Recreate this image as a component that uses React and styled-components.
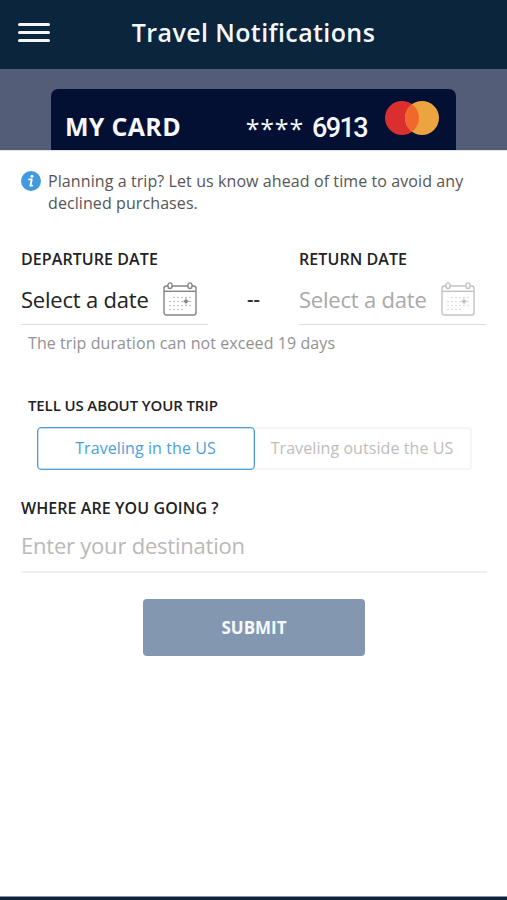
import { useState } from "react";
import styled, { createGlobalStyle } from "styled-components";

const GlobalStyle = createGlobalStyle`
*{
    box-sizing: border-box;
}
body{
    margin:0;
    background-color: #0b253c;
    font-family: "Open Sans", "Noto Sans", sans-serif;
}
button, input{
    font-family: inherit;
}
`

const Page = styled.div`
height: 900px;
display: flex;
flex-direction: column;
overflow: hidden;
background-color: #0b253c;
`

// Top bar

const TopBar = styled.header`
height: 69px;
flex-shrink: 0;
display: grid;
grid-template-columns: 34px 1fr 34px;
align-items: center;
padding: 0 18px 5px;
`
const MenuButton = styled.button`
width: 32px;
height: 19px;
margin-top: 1px;
padding: 0;
border: none;
background: none;
display: flex;
flex-direction: column;
justify-content: space-between;
cursor: pointer;
`
const MenuLine = styled.span`
width: 100%;
height: 3px;
border-radius: 2px;
background-color: #f4f7fa;
`
const Title = styled.h1`
margin: 0;
color: #f4f7fb;
font-size: 25px;
line-height: 34px;
font-weight: 600;
letter-spacing: .4px;
text-align: center;
white-space: nowrap;
`

// Card strip

const CardStrip = styled.div`
height: 81px;
flex-shrink: 0;
padding: 20px 51px 0;
background-color: #545d77;
`
const Card = styled.div`
height: 61px;
display: flex;
align-items: flex-start;
padding: 11px 17px 0 14px;
color: #f5f8fd;
background-color: #031034;
border-radius: 7px 7px 0 0;
`
const CardName = styled.span`
margin-top: 8px;
font-size: 25px;
line-height: 36px;
font-weight: 700;
letter-spacing: .3px;
white-space: nowrap;
`
const CardNumber = styled.span`
display: flex;
margin: 9px 0 0 auto;
gap: 8px;
font-size: 25px;
line-height: 36px;
white-space: nowrap;
`
const Stars = styled.span`
margin-top: 1px;
font-weight: 500;
letter-spacing: .8px;
`
const Digits = styled.span`
margin-top: 1px;
font-family: Roboto, sans-serif;
font-size: 27px;
font-weight: 500;
letter-spacing: -1.6px;
`
const CardLogo = styled.svg`
width: 54px;
height: 36px;
margin-left: 18px;
`

// Sheet

const Sheet = styled.main`
height: 747px;
flex-shrink: 0;
padding: 20px 20px 0 21px;
background-color: white;
border-top: 1px solid #dfe2e8;
border-bottom: 1px solid #8b93a0;
`
const Info = styled.div`
display: flex;
gap: 7px;
height: 77px;
`
const InfoIcon = styled.svg`
width: 20px;
height: 20px;
flex-shrink: 0;
`
const InfoText = styled.p`
margin: -1px 0 0;
color: #555;
font-size: 16px;
line-height: 22px;
letter-spacing: .09px;
white-space: nowrap;
`
const Label = styled.div`
color: #222;
font-size: ${({$size})=>$size || "16px"};
line-height: 22px;
font-weight: 600;
letter-spacing: ${({$spacing})=>$spacing || ".08px"};
margin-left: ${({$indent})=>$indent || "0"};
white-space: nowrap;
`
const Dates = styled.div`
display: grid;
grid-template-columns: 187px 91px 187px;
height: 77px;
`
const DateField = styled.div`
display: flex;
flex-direction: column;
`
const DateButton = styled.button`
height: 55px;
width: 100%;
padding: 4px 11px 0 0;
display: flex;
align-items: center;
justify-content: space-between;
border: none;
border-bottom: 1px solid #dcdcdc;
background: none;
color: ${({$muted})=>$muted ? "#a9a9a9" : "#222"};
font-size: 22px;
letter-spacing: -.2px;
white-space: nowrap;
cursor: pointer;
`
const CalendarSvg = styled.svg`
width: 34px;
height: 34px;
color: ${({$muted})=>$muted ? "#c2c2c2" : "#858585"};
`
const Dash = styled.div`
padding-top: 36px;
color: #333;
font-size: 20px;
line-height: 30px;
font-weight: 600;
text-align: center;
`
const Note = styled.p`
margin: 7px 0 0 7px;
color: #929292;
font-size: 16px;
line-height: 22px;
letter-spacing: .08px;
white-space: nowrap;
`
const TripSection = styled.section`
margin-top: 40px;
`
const Segments = styled.div`
display: flex;
margin: 11px 0 0 15.5px;
height: 43px;
`
const Segment = styled.button`
width: ${({$active})=>$active ? "218px" : "217px"};
padding: 0 0 1px;
border: 2px solid #f5f5f5;
border-left-width: 0;
border-radius: 0 4px 4px 0;
background-color: white;
color: #bdbdbd;
font-size: 16px;
letter-spacing: .08px;
white-space: nowrap;
cursor: pointer;
${({$active})=>$active && `
    border: 1px solid #4f9bd8;
    border-radius: 4px;
    box-shadow: inset 0 0 0 .5px #8dbfe8;
    color: #4b9fe0;
`}
`
const DestinationSection = styled.section`
margin-top: 27px;
`
const DestinationInput = styled.input`
display: block;
width: 466px;
height: 54px;
padding: 0;
border: none;
border-bottom: 2px solid #f0f0f0;
outline: none;
color: #222;
font-size: 22px;
letter-spacing: -.22px;
&::placeholder{
    color: #b9b9b9;
    opacity: 1;
}
`
const SubmitButton = styled.button`
display: block;
width: 222px;
height: 57px;
margin: 26px 0 0 122px;
padding: 0 0 1px;
border: none;
border-radius: 4px;
background-color: #8398b0;
color: #f5faff;
font-size: 17px;
font-weight: 700;
cursor: pointer;
`

const DOT_ROWS = [
    {y: 15.5, xs: [11, 15, 19, 23, 27]},
    {y: 19.5, xs: [7, 11, 15, 19, 23, 27]},
    {y: 23.5, xs: [7, 11, 15, 19, 23, 27]},
    {y: 27.5, xs: [7, 11, 15, 19]},
];

function CalendarIcon({muted}){
    return (
        <CalendarSvg $muted={muted} viewBox="0 0 34 34" fill="none" stroke="currentColor">
            <rect x="1" y="4" width="32" height="29" rx="2.2" strokeWidth="1.4" />
            <path d="M1 9.3H33" strokeWidth="1.4" />
            <ellipse cx="7" cy="3.7" rx="2.1" ry="2.8" fill="white" strokeWidth="1.4" />
            <ellipse cx="27" cy="3.7" rx="2.1" ry="2.8" fill="white" strokeWidth="1.4" />
            {DOT_ROWS.map((row)=> row.xs.map((x)=>(
                <circle key={x + "-" + row.y} cx={x} cy={row.y} r=".75" fill="currentColor" stroke="none" opacity=".75" />
            )))}
            <circle cx="23" cy="19.3" r="1.9" fill="currentColor" stroke="none" />
            <path d="M23 16V22.6M20 19.3H26" strokeWidth=".7" />
        </CalendarSvg>
    )
}

const TRIP_TYPES = ["Traveling in the US", "Traveling outside the US"];

export default function App(){
    const [tripType, setTripType] = useState(TRIP_TYPES[0]);
    const [destination, setDestination] = useState("");

    return (
        <Page>
            <GlobalStyle />
            <TopBar>
                <MenuButton aria-label="Menu">
                    <MenuLine />
                    <MenuLine />
                    <MenuLine />
                </MenuButton>
                <Title>Travel Notifications</Title>
            </TopBar>
            <CardStrip>
                <Card>
                    <CardName>MY CARD</CardName>
                    <CardNumber>
                        <Stars>****</Stars>
                        <Digits>6913</Digits>
                    </CardNumber>
                    <CardLogo viewBox="0 0 54 36">
                        <circle cx="17" cy="18" r="17" fill="#da2f2e" />
                        <circle cx="37" cy="18" r="17" fill="#eba43f" />
                        <path d="M27 4.25A17 17 0 0 1 27 31.75A17 17 0 0 1 27 4.25Z" fill="#f0682c" />
                    </CardLogo>
                </Card>
            </CardStrip>
            <Sheet>
                <Info>
                    <InfoIcon viewBox="0 0 20 20">
                        <circle cx="10" cy="10" r="10" fill="#4299df" />
                        <circle cx="11" cy="5.2" r="1.5" fill="white" />
                        <path d="M8 8.4H10.8L9.4 14.6H11.2" fill="none" stroke="white" strokeWidth="1.9" strokeLinejoin="round" strokeLinecap="round" />
                    </InfoIcon>
                    <InfoText>
                        Planning a trip? Let us know ahead of time to avoid any<br />
                        declined purchases.
                    </InfoText>
                </Info>
                <Dates>
                    <DateField>
                        <Label>DEPARTURE DATE</Label>
                        <DateButton>Select a date <CalendarIcon /></DateButton>
                    </DateField>
                    <Dash>--</Dash>
                    <DateField>
                        <Label>RETURN DATE</Label>
                        <DateButton $muted>Select a date <CalendarIcon muted /></DateButton>
                    </DateField>
                </Dates>
                <Note>The trip duration can not exceed 19 days</Note>
                <TripSection>
                    <Label $size="15px" $indent="7px" $spacing="-.12px">TELL US ABOUT YOUR TRIP</Label>
                    <Segments>
                        {TRIP_TYPES.map((type)=>(
                            <Segment key={type} $active={type === tripType} onClick={()=> setTripType(type)}>{type}</Segment>
                        ))}
                    </Segments>
                </TripSection>
                <DestinationSection>
                    <Label>WHERE ARE YOU GOING ?</Label>
                    <DestinationInput
                        placeholder="Enter your destination"
                        value={destination}
                        onChange={(e)=> setDestination(e.target.value)}
                    />
                </DestinationSection>
                <SubmitButton>SUBMIT</SubmitButton>
            </Sheet>
        </Page>
    )
}
